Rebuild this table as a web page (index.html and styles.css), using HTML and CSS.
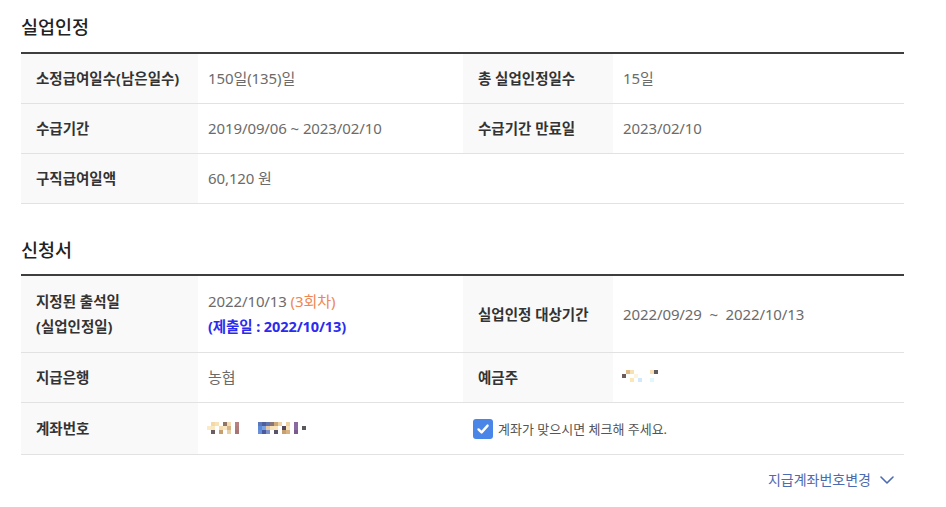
FILE: index.html
```html
<!DOCTYPE html>
<html lang="ko">
<head>
<meta charset="utf-8">
<title>실업인정</title>
<link rel="stylesheet" href="styles.css">
</head>
<body>
<div class="page">
  <section class="section section--first">
    <h2 class="section__title">실업인정</h2>
    <div class="info">
      <div class="info__row">
        <div class="info__label">소정급여일수(남은일수)</div>
        <div class="info__value">150일(135)일</div>
        <div class="info__label">총 실업인정일수</div>
        <div class="info__value">15일</div>
      </div>
      <div class="info__row">
        <div class="info__label">수급기간</div>
        <div class="info__value">2019/09/06 ~ 2023/02/10</div>
        <div class="info__label">수급기간 만료일</div>
        <div class="info__value">2023/02/10</div>
      </div>
      <div class="info__row">
        <div class="info__label">구직급여일액</div>
        <div class="info__value info__value--wide">60,120 원</div>
      </div>
    </div>
  </section>

  <section class="section section--second">
    <h2 class="section__title">신청서</h2>
    <div class="info">
      <div class="info__row info__row--double">
        <div class="info__label"><div>지정된 출석일<br>(실업인정일)</div></div>
        <div class="info__value"><div>2022/10/13 <span class="round">(3회차)</span><br><span class="submit">(제출일 : 2022/10/13)</span></div></div>
        <div class="info__label"><div>실업인정 대상기간</div></div>
        <div class="info__value"><div>2022/09/29 &nbsp;~&nbsp; 2022/10/13</div></div>
      </div>
      <div class="info__row">
        <div class="info__label">지급은행</div>
        <div class="info__value">농협</div>
        <div class="info__label">예금주</div>
        <div class="info__value">
          <svg class="mosaic mosaic--name" width="40" height="16" viewBox="0 0 40 16" aria-label="가려진 예금주">
            <rect x="4" y="0" width="4" height="4" fill="#dfbb8a"/>
            <rect x="8" y="0" width="4" height="4" fill="#f7e1b4"/>
            <rect x="0" y="4" width="4" height="4" fill="#6e5a5c"/>
            <rect x="12" y="4" width="4" height="4" fill="#fdf4df"/>
            <rect x="8" y="8" width="4" height="4" fill="#fbe6b6"/>
            <rect x="16" y="8" width="4" height="4" fill="#cfe8fb"/>
            <rect x="28" y="0" width="4" height="4" fill="#f7e1b8"/>
            <rect x="32" y="0" width="4" height="4" fill="#5e5a5e"/>
            <rect x="28" y="8" width="4" height="4" fill="#dff8fc"/>
          </svg>
        </div>
      </div>
      <div class="info__row info__row--check">
        <div class="info__label">계좌번호</div>
        <div class="info__value">
          <svg class="mosaic" width="112" height="12" viewBox="0 0 112 12" aria-label="가려진 계좌번호">
            <rect x="4" y="0" width="4" height="4" fill="#f3d9a8"/>
            <rect x="8" y="0" width="4" height="4" fill="#f7e2b8"/>
            <rect x="16" y="0" width="4" height="4" fill="#8e7565"/>
            <rect x="20" y="0" width="4" height="4" fill="#f4ddb2"/>
            <rect x="28" y="0" width="4" height="4" fill="#b88080"/>
            <rect x="0" y="4" width="4" height="4" fill="#fbeac6"/>
            <rect x="4" y="4" width="4" height="4" fill="#fbe7c0"/>
            <rect x="12" y="4" width="4" height="4" fill="#f3dcb2"/>
            <rect x="16" y="4" width="4" height="4" fill="#fae6c0"/>
            <rect x="20" y="4" width="4" height="4" fill="#d9b48a"/>
            <rect x="28" y="4" width="4" height="4" fill="#b07c7c"/>
            <rect x="4" y="8" width="4" height="4" fill="#6a5e62"/>
            <rect x="12" y="8" width="4" height="4" fill="#c7a070"/>
            <rect x="20" y="8" width="4" height="4" fill="#e7cfa6"/>
            <rect x="28" y="8" width="4" height="4" fill="#a87474"/>

            <rect x="51" y="0" width="4" height="4" fill="#5d77b8"/>
            <rect x="55" y="0" width="4" height="4" fill="#4f5f9c"/>
            <rect x="59" y="0" width="4" height="4" fill="#6274b0"/>
            <rect x="63" y="0" width="4" height="4" fill="#8a7676"/>
            <rect x="67" y="0" width="4" height="4" fill="#caa878"/>
            <rect x="71" y="0" width="4" height="4" fill="#efd2a4"/>
            <rect x="79" y="0" width="4" height="4" fill="#ecd0a0"/>
            <rect x="87" y="0" width="4" height="4" fill="#8a6a9c"/>
            <rect x="51" y="4" width="4" height="4" fill="#5a8ad8"/>
            <rect x="55" y="4" width="4" height="4" fill="#7aa2e2"/>
            <rect x="59" y="4" width="4" height="4" fill="#e8c8a0"/>
            <rect x="63" y="4" width="4" height="4" fill="#fae2b8"/>
            <rect x="67" y="4" width="4" height="4" fill="#fae4bc"/>
            <rect x="75" y="4" width="4" height="4" fill="#504858"/>
            <rect x="79" y="4" width="4" height="4" fill="#f8e0b8"/>
            <rect x="87" y="4" width="4" height="4" fill="#8a6aa0"/>
            <rect x="95" y="4" width="4" height="4" fill="#5a5a5e"/>
            <rect x="51" y="8" width="4" height="4" fill="#6890d8"/>
            <rect x="55" y="8" width="4" height="4" fill="#4a5aa0"/>
            <rect x="59" y="8" width="4" height="4" fill="#7d90c8"/>
            <rect x="67" y="8" width="4" height="4" fill="#585468"/>
            <rect x="75" y="8" width="4" height="4" fill="#c8a070"/>
            <rect x="79" y="8" width="4" height="4" fill="#d9b284"/>
            <rect x="87" y="8" width="4" height="4" fill="#7a5a90"/>
          </svg>
        </div>
        <label class="confirm">
          <span class="confirm__box">
            <svg width="14" height="14" viewBox="0 0 14 14"><path d="M2.5 7.4 L5.6 10.4 L11.6 3.6" fill="none" stroke="#fff" stroke-width="2.4" stroke-linecap="round" stroke-linejoin="round"/></svg>
          </span>
          <span class="confirm__text">계좌가 맞으시면 체크해 주세요.</span>
        </label>
      </div>
    </div>
    <div class="actions">
      <a class="toggle-link" href="#">지급계좌번호변경
        <svg class="toggle-link__icon" width="14" height="8" viewBox="0 0 14 8"><path d="M1 1 L7 7 L13 1" fill="none" stroke="#4d6bb0" stroke-width="1.6" stroke-linecap="round" stroke-linejoin="round"/></svg>
      </a>
    </div>
  </section>
</div>
</body>
</html>
```

FILE: styles.css
```css
html, body {
  margin: 0;
  padding: 0;
  background: #fff;
}

body {
  font-family: "Noto Sans", "Noto Sans CJK KR", sans-serif;
  color: #333;
}

.page {
  width: 883px;
  padding-left: 21px;
}

.section--first {
  padding-top: 14px;
}

.section--second {
  padding-top: 33px;
}

.section__title {
  margin: 0 0 12px;
  font-size: 18.5px;
  line-height: 26px;
  font-weight: 500;
  color: #222;
}

.section--second .section__title {
  margin-bottom: 11px;
}

.info {
  border-top: 2px solid #3e3e3e;
}

.info__row {
  display: grid;
  grid-template-columns: 177px 265px 150px 1fr;
  border-bottom: 1px solid #e2e2e2;
}

.info__label,
.info__value {
  padding: 12px 10px;
  line-height: 25px;
}

.info__label {
  padding-left: 15px;
  background: #f9f9f9;
  font-size: 14.5px;
  font-weight: 700;
  color: #333;
}

.info__value {
  font-size: 15px;
  letter-spacing: -0.1px;
  color: #6b6b6b;
}

.info__value--wide {
  grid-column: 2 / 5;
}

.info__row--double .info__label,
.info__row--double .info__value {
  padding-top: 13px;
  padding-bottom: 13px;
  display: flex;
  align-items: center;
}

.round {
  color: #f08654;
}

.submit {
  color: #2b2bf0;
  font-weight: 700;
  font-size: 14.5px;
}

.mosaic {
  display: block;
}

.info__value .mosaic {
  margin-top: 6px;
  margin-left: -1px;
}

.info__value .mosaic--name {
  margin-top: 5px;
}

.info__row--check .info__label,
.info__row--check .info__value {
  padding-top: 13px;
  padding-bottom: 13px;
}

.confirm {
  grid-column: 3 / 5;
  display: flex;
  align-items: center;
  gap: 5px;
  padding-left: 10px;
  cursor: pointer;
}

.confirm__box {
  width: 20px;
  height: 20px;
  border-radius: 3px;
  background: #4a86e8;
  display: flex;
  align-items: center;
  justify-content: center;
}

.confirm__text {
  font-size: 13px;
  color: #555;
}

.actions {
  display: flex;
  justify-content: flex-end;
  padding-top: 15px;
  padding-right: 10px;
}

.toggle-link {
  display: flex;
  align-items: center;
  gap: 9px;
  font-size: 14px;
  line-height: 20px;
  color: #4d6bb0;
  text-decoration: none;
}

.toggle-link__icon {
  display: block;
}
```
